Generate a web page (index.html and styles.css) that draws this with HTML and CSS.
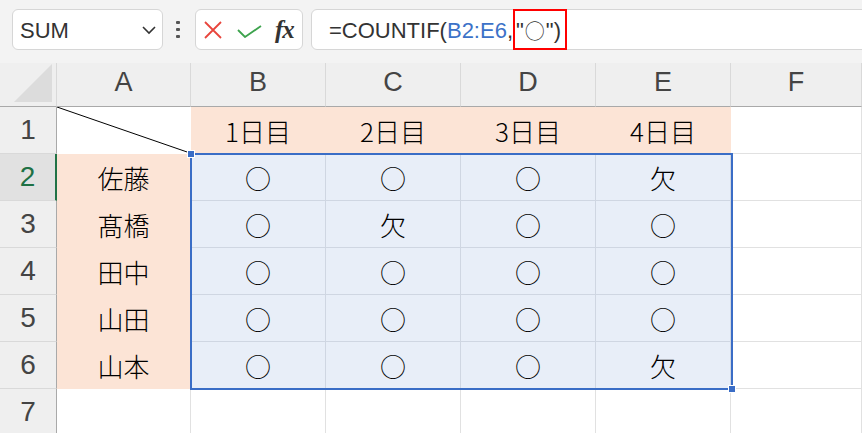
FILE: index.html
```html
<!DOCTYPE html>
<html lang="ja">
<head>
<meta charset="utf-8">
<title>COUNTIF</title>
<link rel="stylesheet" href="styles.css">
</head>
<body>
<div class="app">
  <div class="toolbar">
    <div class="namebox">
      <span class="name">SUM</span>
      <svg class="chev" width="16" height="10" viewBox="0 0 16 10"><path d="M2 2 L8 8 L14 2" fill="none" stroke="#333" stroke-width="1.6"/></svg>
    </div>
    <div class="grip"><i></i><i></i><i></i></div>
    <div class="buttons">
      <svg class="ico-x" width="18" height="18" viewBox="0 0 18 18"><path d="M1 1 L17 17 M17 1 L1 17" stroke="#e8453c" stroke-width="1.8" fill="none"/></svg>
      <svg class="ico-ok" width="25" height="13" viewBox="0 0 25 13"><path d="M1 5 L8 12 L24 1" stroke="#3da34d" stroke-width="1.8" fill="none"/></svg>
      <span class="fx">fx</span>
    </div>
    <div class="formula">
      <span class="ftext">=COUNTIF(</span><span class="ref">B2:E6</span><span class="ftext">,</span><span class="hl">"<span class="circ">○</span>")</span>
    </div>
  </div>

  <div class="sheet">
    <div class="corner"><div class="tri"></div></div>
    <div class="ch">A</div>
    <div class="ch">B</div>
    <div class="ch">C</div>
    <div class="ch">D</div>
    <div class="ch">E</div>
    <div class="ch">F</div>

    <div class="rh">1</div>
    <div class="c diag"><svg width="100%" height="100%" viewBox="0 0 133 46" preserveAspectRatio="none"><line x1="0" y1="0" x2="133" y2="46" stroke="#000" stroke-width="1"/></svg></div>
    <div class="c peach">1日目</div>
    <div class="c peach">2日目</div>
    <div class="c peach">3日目</div>
    <div class="c peach">4日目</div>
    <div class="c"></div>

    <div class="rh active">2</div>
    <div class="c peach">佐藤</div>
    <div class="c sel">○</div>
    <div class="c sel">○</div>
    <div class="c sel">○</div>
    <div class="c sel">欠</div>
    <div class="c"></div>

    <div class="rh">3</div>
    <div class="c peach">髙橋</div>
    <div class="c sel">○</div>
    <div class="c sel">欠</div>
    <div class="c sel">○</div>
    <div class="c sel">○</div>
    <div class="c"></div>

    <div class="rh">4</div>
    <div class="c peach">田中</div>
    <div class="c sel">○</div>
    <div class="c sel">○</div>
    <div class="c sel">○</div>
    <div class="c sel">○</div>
    <div class="c"></div>

    <div class="rh">5</div>
    <div class="c peach">山田</div>
    <div class="c sel">○</div>
    <div class="c sel">○</div>
    <div class="c sel">○</div>
    <div class="c sel">○</div>
    <div class="c"></div>

    <div class="rh">6</div>
    <div class="c peach">山本</div>
    <div class="c sel">○</div>
    <div class="c sel">○</div>
    <div class="c sel">○</div>
    <div class="c sel">欠</div>
    <div class="c"></div>

    <div class="rh">7</div>
    <div class="c"></div>
    <div class="c"></div>
    <div class="c"></div>
    <div class="c"></div>
    <div class="c"></div>
    <div class="c"></div>

    <div class="selection"><i class="handle tl"></i><i class="handle br"></i></div>
  </div>
</div>
</body>
</html>
```

FILE: styles.css
```css
* { box-sizing: border-box; }
html, body { margin: 0; padding: 0; }
body {
  width: 862px;
  height: 433px;
  overflow: hidden;
  background: #fff;
  font-family: "Liberation Sans", Arial, sans-serif;
}
.app { width: 862px; overflow: hidden; }

/* toolbar */
.toolbar {
  height: 63px;
  background: #f3f3f3;
  display: flex;
  align-items: flex-start;
  padding: 9px 0 0 12px;
}
.namebox {
  width: 151px;
  height: 41px;
  background: #fff;
  border: 1px solid #d6d6d6;
  border-radius: 6px;
  display: flex;
  align-items: center;
  justify-content: space-between;
  padding: 0 5px 0 7px;
}
.name { font-size: 22px; color: #333; margin-top: 2px; }
.chev { margin-top: 1px; }
.grip {
  margin-left: 13px;
  width: 5px;
  height: 41px;
  display: flex;
  flex-direction: column;
  justify-content: center;
  gap: 4px;
}
.grip i {
  display: block;
  width: 4px;
  height: 3px;
  background: #555;
  border-radius: 1px;
}
.buttons {
  margin-left: 14px;
  width: 108px;
  height: 41px;
  background: #fff;
  border: 1px solid #d6d6d6;
  border-radius: 6px;
  display: flex;
  align-items: center;
  padding-left: 8px;
}
.ico-x { margin-top: 1px; }
.ico-ok { margin-left: 15px; margin-top: 3px; }
.fx {
  margin-left: 13px;
  font-family: "Liberation Serif", "Times New Roman", serif;
  font-style: italic;
  font-weight: bold;
  font-size: 25px;
  color: #333;
  letter-spacing: -1px;
}
.formula {
  margin-left: 8px;
  flex: 1;
  margin-right: -12px;
  height: 41px;
  background: #fff;
  border: 1px solid #d6d6d6;
  border-radius: 6px;
  display: flex;
  align-items: center;
  padding-left: 17px;
  font-size: 22px;
  color: #333;
  font-family: "Liberation Sans", "Noto Sans CJK JP", sans-serif;
}
.ftext { margin-top: 2px; }
.ref { color: #3c72c8; margin-top: 2px; }
.hl {
  align-self: stretch;
  display: flex;
  align-items: center;
  margin-top: -1px;
  margin-bottom: -1px;
  border: 2px solid #ff0000;
  padding: 2px 4px 0 1px;
}
.circ {
  font-family: "Noto Sans CJK JP", sans-serif;
  font-weight: 300;
  font-size: 20px;
  margin: 0 1px;
}

/* sheet */
.sheet {
  position: relative;
  display: grid;
  grid-template-columns: 57px 134px 135px 135px 135px 135px 131px;
  grid-template-rows: 44px repeat(7, 47px);
}
.corner {
  background: #efefef;
  border-right: 1px solid #d9d9d9;
  border-bottom: 1px solid #a9a9a9;
  display: flex;
  align-items: flex-end;
  justify-content: flex-end;
  padding: 0 4px 4px 0;
}
.tri {
  width: 38px;
  height: 38px;
  background: #dcdcdc;
  clip-path: polygon(100% 0, 100% 100%, 0 100%);
}
.ch {
  background: #efefef;
  border-right: 1px solid #d9d9d9;
  border-bottom: 1px solid #a9a9a9;
  display: flex;
  align-items: center;
  justify-content: center;
  padding-bottom: 4px;
  font-size: 27px;
  color: #444;
}
.rh {
  background: #efefef;
  border-right: 1px solid #a9a9a9;
  border-bottom: 1px solid #d9d9d9;
  display: flex;
  align-items: center;
  justify-content: center;
  font-size: 28px;
  color: #444;
}
.rh.active {
  background: #e1e1e1;
  color: #1e7145;
  border-right: 2px solid #217346;
}
.c {
  background: #fff;
  border-right: 1px solid #e1e1e1;
  border-bottom: 1px solid #e1e1e1;
  display: flex;
  align-items: center;
  justify-content: center;
  font-family: "Noto Sans CJK JP", "Noto Sans", sans-serif;
  font-weight: 300;
  font-size: 26px;
  color: #000;
}
.c.peach { background: #fce4d6; border-color: #fce4d6; }
.c.sel { background: #e8eef8; border-color: #cfd6e2; }
.c.diag { border-color: #fff; }
.c.diag svg { display: block; }

.selection {
  position: absolute;
  left: 190px;
  top: 90px;
  width: 543px;
  height: 237px;
  border: 2px solid #3a6dc6;
  pointer-events: none;
}
.handle {
  position: absolute;
  width: 8px;
  height: 8px;
  background: #3a6dc6;
  border: 1px solid #fff;
}
.handle.tl { left: -5px; top: -5px; }
.handle.br { right: -5px; bottom: -5px; }
```
